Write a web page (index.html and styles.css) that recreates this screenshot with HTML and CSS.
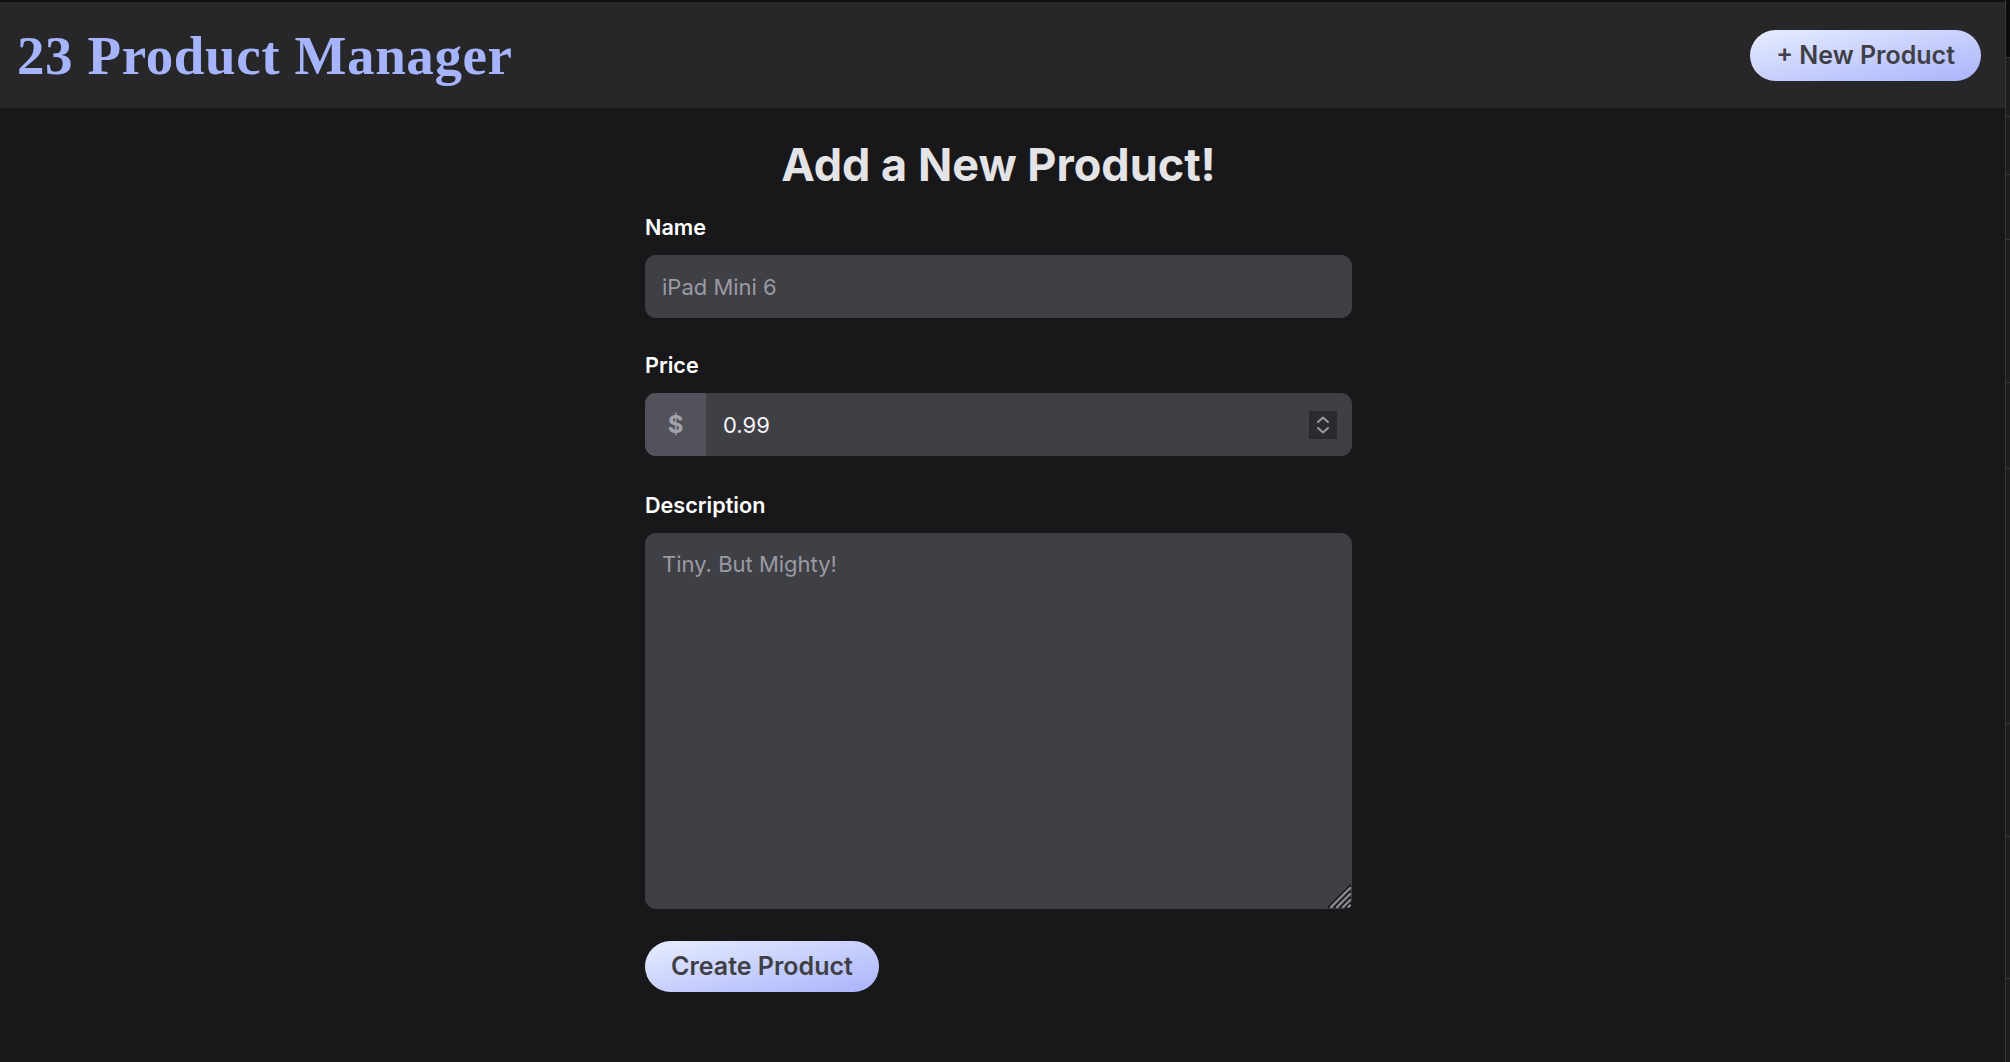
FILE: index.html
```html
<!DOCTYPE html>
<html lang="en">
<head>
<meta charset="utf-8">
<title>23 Product Manager</title>
<link rel="stylesheet" href="styles.css">
</head>
<body>
<div class="app">
  <div class="main">
    <header class="topbar">
      <h1 class="brand">23 Product Manager</h1>
      <button class="pill" type="button">+ New Product</button>
    </header>
    <main class="content">
      <form class="form">
        <h2 class="form-title">Add a New Product!</h2>
        <div class="field">
          <label class="label" for="name">Name</label>
          <input class="control" id="name" type="text" placeholder="iPad Mini 6">
        </div>
        <div class="field field-price">
          <label class="label" for="price">Price</label>
          <div class="group">
            <span class="prefix">$</span>
            <input class="control grow" id="price" type="text" value="0.99">
            <span class="spinner">
              <svg width="28" height="28" viewBox="0 0 28 28" fill="none" stroke="#9a9aa3" stroke-width="2" stroke-linecap="round" stroke-linejoin="round">
                <path d="M9 11 L14 6.5 L19 11"/>
                <path d="M9 17 L14 21.5 L19 17"/>
              </svg>
            </span>
          </div>
        </div>
        <div class="field field-last">
          <label class="label" for="desc">Description</label>
          <div class="area-wrap">
            <textarea class="control area" id="desc" placeholder="Tiny. But Mighty!"></textarea>
            <svg class="grip" width="26" height="26" viewBox="0 0 26 26" fill="none" stroke-width="2" stroke-linecap="square">
              <path d="M3 24 L24 3" stroke="#141416"/>
              <path d="M5 24 L24 5" stroke="#8d8d94"/>
              <path d="M9 24 L24 9" stroke="#141416"/>
              <path d="M11 24 L24 11" stroke="#8d8d94"/>
              <path d="M15 24 L24 15" stroke="#141416"/>
              <path d="M17 24 L24 17" stroke="#8d8d94"/>
              <path d="M21 24 L24 21" stroke="#141416"/>
              <path d="M22.5 24 L24 22.5" stroke="#8d8d94"/>
            </svg>
          </div>
        </div>
        <button class="pill" type="button">Create Product</button>
      </form>
    </main>
  </div>
  <div class="edge">
    <div class="seg seg-top"></div>
    <div class="seg s1"></div>
    <div class="seg s2"></div>
    <div class="seg s3"></div>
    <div class="seg s4"></div>
    <div class="seg s5"></div>
    <div class="seg s6"></div>
    <div class="seg s7"></div>
    <div class="seg s8"></div>
    <div class="seg s9"></div>
  </div>
</div>
</body>
</html>
```
FILE: styles.css
```css
* { box-sizing: border-box; }

html, body {
  margin: 0;
  padding: 0;
  height: 100%;
  background: #18181b;
  color: #f4f4f5;
  font-family: Inter, "Noto Sans", "Liberation Sans", sans-serif;
  color-scheme: dark;
}

.app {
  display: flex;
  min-height: 100vh;
}

.main {
  flex: 1;
  display: flex;
  flex-direction: column;
  border-top: 2px solid #0e0e10;
}

.topbar {
  height: 106px;
  background: #27272a;
  display: flex;
  align-items: center;
  justify-content: space-between;
  padding: 0 24px 0 17px;
}

.brand {
  margin: 0;
  font-family: Georgia, "Liberation Serif", "DejaVu Serif", serif;
  font-weight: 700;
  font-size: 55px;
  letter-spacing: 0.6px;
  line-height: 1;
  color: #a5b4fc;
  padding-top: 0;
}

.pill {
  height: 51px;
  padding: 0 26px;
  border: none;
  border-radius: 999px;
  background: linear-gradient(to bottom right, #e7edff, #a9b4fb);
  color: #3f3f46;
  font-family: Inter, "Liberation Sans", sans-serif;
  font-size: 25px;
  font-weight: 600;
  line-height: 1;
  cursor: pointer;
}

.content {
  flex: 1;
  display: flex;
  justify-content: center;
  padding: 34px 8px 40px 0;
}

.form {
  width: 707px;
  display: flex;
  flex-direction: column;
  align-items: flex-start;
}

.form-title {
  align-self: stretch;
  margin: 0 0 30px;
  text-align: center;
  font-size: 45px;
  font-weight: 700;
  line-height: 45px;
  color: #e4e4e7;
}

.field {
  align-self: stretch;
  display: flex;
  flex-direction: column;
  margin-bottom: 37px;
}

.field-price {
  margin-bottom: 39px;
}

.field-last {
  margin-bottom: 32px;
}

.label {
  display: block;
  font-size: 21.6px;
  font-weight: 600;
  line-height: 20px;
  margin-bottom: 18px;
  color: #ffffff;
}

.control {
  width: 100%;
  height: 63px;
  padding: 15px 17px;
  border: none;
  outline: none;
  border-radius: 11px;
  background: #3f3f46;
  color: #f4f4f5;
  font-family: Inter, "Liberation Sans", sans-serif;
  font-size: 22px;
  line-height: 33px;
}

.control::placeholder {
  color: #9a9aa2;
  opacity: 1;
}

.area-wrap {
  position: relative;
}

.area {
  height: 376px;
  resize: none;
  display: block;
}

.grip {
  position: absolute;
  right: 0;
  bottom: 0;
  pointer-events: none;
}

.group {
  display: flex;
  align-items: center;
  height: 63px;
  border-radius: 11px;
  background: #3f3f46;
  overflow: hidden;
}

.prefix {
  width: 61px;
  height: 100%;
  flex: none;
  display: flex;
  align-items: center;
  justify-content: center;
  background: #52525b;
  color: #a1a1aa;
  font-size: 24px;
  font-weight: 700;
}

.grow {
  flex: 1;
  width: auto;
  background: transparent;
  border-radius: 0;
}

.spinner {
  flex: none;
  width: 28px;
  height: 28px;
  margin-right: 15px;
  background: #2b2a31;
  display: flex;
}

.edge {
  width: 5px;
  flex: none;
  display: flex;
  flex-direction: column;
  background: #1e1e21;
  border-left: 1px solid #38383c;
}

.seg {
  border-bottom: 1px solid #38383c;
}

.seg-top { height: 58px; background: #0c0c0d; }
.s1 { height: 59px; }
.s2 { height: 58px; }
.s3 { height: 65px; }
.s4 { height: 143px; }
.s5 { height: 86px; }
.s6 { height: 255px; }
.s7 { height: 113px; }
.s8 { height: 142px; }
.s9 { flex: 1; border-bottom: none; }
```
